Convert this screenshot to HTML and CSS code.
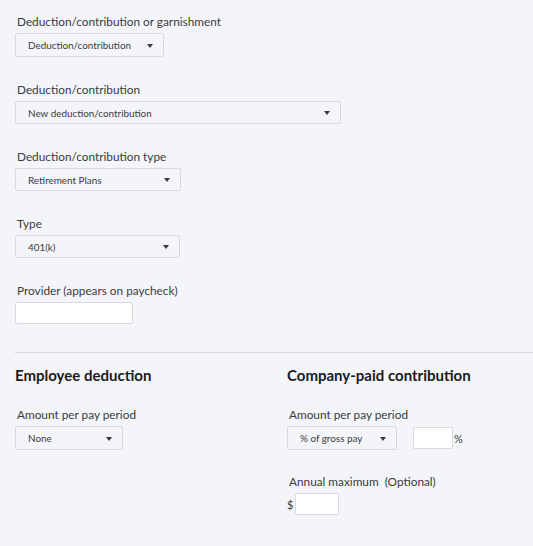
FILE: index.html
```html
<!DOCTYPE html>
<html>
<head>
<meta charset="utf-8">
<link rel="stylesheet" href="styles.css">
</head>
<body>
<div class="page">
  <div class="field">
    <label class="label">Deduction/contribution or garnishment</label>
    <div class="select w148"><span>Deduction/contribution</span><i class="caret"></i></div>
  </div>
  <div class="field">
    <label class="label">Deduction/contribution</label>
    <div class="select w325"><span>New deduction/contribution</span><i class="caret"></i></div>
  </div>
  <div class="field">
    <label class="label">Deduction/contribution type</label>
    <div class="select w165"><span>Retirement Plans</span><i class="caret"></i></div>
  </div>
  <div class="field">
    <label class="label">Type</label>
    <div class="select w164"><span>401(k)</span><i class="caret"></i></div>
  </div>
  <div class="field last">
    <label class="label">Provider (appears on paycheck)</label>
    <div class="input w117"></div>
  </div>
</div>
<hr class="divider">
<div class="cols">
  <div class="col">
    <h3 class="heading">Employee deduction</h3>
    <label class="label">Amount per pay period</label>
    <div class="select w107"><span>None</span><i class="caret"></i></div>
  </div>
  <div class="col">
    <h3 class="heading">Company-paid contribution</h3>
    <label class="label">Amount per pay period</label>
    <div class="row">
      <div class="select w109"><span>% of gross pay</span><i class="caret"></i></div>
      <div class="input w39 pct"></div><span class="unit">%</span>
    </div>
    <label class="label annual">Annual maximum&nbsp; (Optional)</label>
    <div class="row">
      <span class="unit dollar">$</span><div class="input w43"></div>
    </div>
  </div>
</div>
</body>
</html>
```
FILE: styles.css
```css
html, body {
  margin: 0;
  padding: 0;
  background: #f4f5f8;
  font-family: Lato, "Open Sans", sans-serif;
  color: #393a3d;
}
.page {
  padding: 14px 0 0 15px;
}
.field {
  margin-bottom: 25px;
}
.field.last {
  margin-bottom: 0;
}
.label {
  display: block;
  font-size: 11.8px;
  line-height: 16px;
  height: 16px;
  margin: 0 0 3px 2px;
  color: #393a3d;
}
.select {
  box-sizing: border-box;
  height: 24px;
  border: 1px solid #d8dadf;
  border-radius: 2px;
  display: flex;
  align-items: center;
  justify-content: space-between;
  padding: 0 10px 0 12px;
  font-size: 9.9px;
  color: #393a3d;
}
.select span { white-space: nowrap; }
.caret {
  width: 0;
  height: 0;
  border-left: 3.5px solid transparent;
  border-right: 3.5px solid transparent;
  border-top: 4px solid #393a3d;
  margin-top: 1px;
}
.w148 { width: 149px; }
.w325 { width: 326px; height: 23px; }
.w165 { width: 166px; height: 23px; }
.w164 { width: 165px; height: 23px; }
.w107 { width: 108px; }
.w109 { width: 110px; }
.input {
  box-sizing: border-box;
  height: 22px;
  background: #fff;
  border: 1px solid #d8dadf;
  border-radius: 2px;
}
.w117 { width: 118px; }
.w39 { width: 40px; }
.w43 { width: 44px; }
.divider {
  margin: 28px 0 0 15px;
  border: 0;
  border-top: 1px solid #d4d6da;
  height: 0;
}
.cols {
  display: grid;
  grid-template-columns: 272px 1fr;
  padding: 13px 0 0 15px;
}
.heading {
  margin: 0 0 23px 0;
  font-size: 15px;
  line-height: 18px;
  font-weight: 700;
  color: #1b1b1d;
}
.row {
  display: flex;
  align-items: center;
}
.pct { margin-left: 16px; }
.unit {
  font-size: 11px;
  margin-left: 1px;
}
.dollar { margin: 0 2px 0 0; }
.annual { margin-top: 24px; }
```
